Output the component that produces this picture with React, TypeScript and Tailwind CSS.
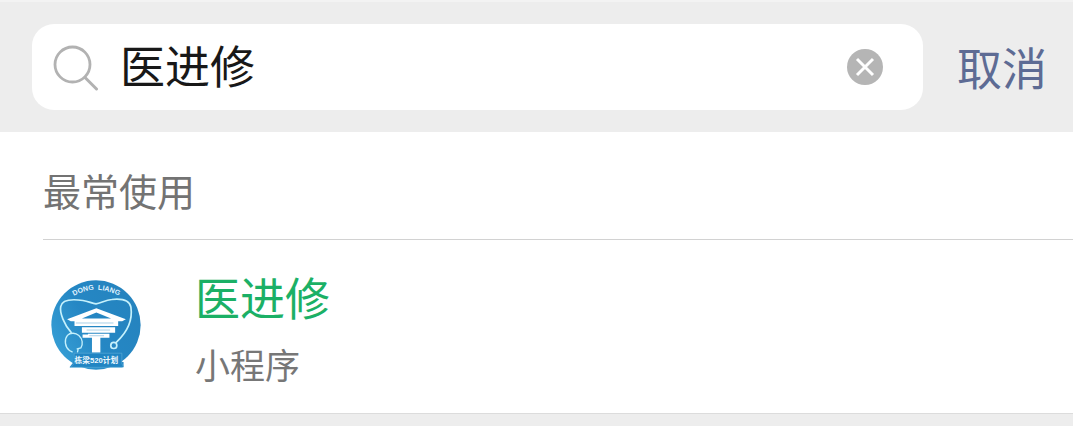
import { useState } from "react";

type MiniProgram = {
  name: string;
  kind: string;
};

const FREQUENT: MiniProgram[] = [{ name: "医进修", kind: "小程序" }];

function SearchIcon() {
  return (
    <svg viewBox="0 0 48 48" className="size-12 shrink-0" fill="none" stroke="#b2b2b2" aria-hidden="true">
      <circle cx="20.5" cy="21.5" r="17.5" strokeWidth="2.8" />
      <path d="M33 34.5 44.5 46" strokeWidth="3" strokeLinecap="round" />
    </svg>
  );
}

function ClearIcon() {
  return (
    <svg viewBox="0 0 36 36" className="size-9" aria-hidden="true">
      <circle cx="18" cy="18" r="18" fill="#b5b5b5" />
      <path d="M10 10 26 26M26 10 10 26" stroke="#fff" strokeWidth="3" />
    </svg>
  );
}

function ProgramLogo() {
  return (
    <svg viewBox="36 32 268 268" className="mt-[18px] size-[90px] shrink-0" role="img" aria-label="Dong Liang">
      <defs>
        <linearGradient id="disc" x1="0" y1="0.8" x2="1" y2="0.2">
          <stop offset="0" stopColor="#38a0d6" />
          <stop offset="0.45" stopColor="#2587c4" />
          <stop offset="1" stopColor="#2583be" />
        </linearGradient>
        <path id="arc" d="M92 86Q170 36 250 86" />
      </defs>
      <circle cx="170" cy="166" r="133" fill="url(#disc)" />
      <text fill="#e2f4ff" fontSize="21" fontWeight="700" fontFamily="Liberation Sans, sans-serif">
        <textPath href="#arc" startOffset="50%" textAnchor="middle">
          DONG&#160; LIANG
        </textPath>
      </text>

      {/* stethoscope */}
      <g fill="none" stroke="#c5f1fc" strokeWidth="5" strokeLinecap="round" strokeLinejoin="round">
        <path d="M96 188C76 166 61 130 65 111C69 88 103 89 131 93C149 96 158 102 170 103C184 101 199 91 217 90C245 87 270 92 274 113C280 155 258 192 231 217" />
        <path
          d="M91 242C77 231 75 209 85 197C94 187 110 190 119 197C130 207 132 223 125 234L114 237M91 242 99 246M117 237 115 246"
          strokeWidth="4"
        />
        <circle cx="223" cy="227" r="9" />
      </g>

      {/* pavilion */}
      <g fill="#fff">
        <path fillRule="evenodd" d="M84 149 171 116 259 149 248 155H95ZM128 147H215L171 129Z" />
        <path d="M106 152H236V169H106ZM128 173H227V189H128ZM146 192H210V204H130V194H146ZM158 204H183V248H158Z" />
      </g>
      <path d="M110 160H222M142 181H212M150 198H194" stroke="#80badd" strokeWidth="2" />

      {/* name plate */}
      <path d="M105 250H247V276H252V292H91L101 279Z" fill="#2185c3" />
      <path d="M105 250H247V281L252 291M105 250V281L93 292H249" fill="none" stroke="#5babd6" strokeWidth="2" />
      <text
        x="171"
        y="280"
        textAnchor="middle"
        fill="#eef9ff"
        fontSize="23"
        fontWeight="700"
        fontFamily="Liberation Sans, Noto Sans CJK SC, sans-serif"
      >
        栋梁520计划
      </text>
    </svg>
  );
}

export default function App() {
  const [query, setQuery] = useState("医进修");

  return (
    <div className="min-h-screen bg-[#ededed] font-['Noto_Sans_CJK_SC',sans-serif]">
      <header className="flex items-center gap-[34px] border-t-2 border-[#f3f3f3] pt-[22px] pr-[26px] pb-[22px] pl-8">
        <div className="flex h-[86px] min-w-0 flex-1 items-center rounded-[22px] bg-white pr-10 pl-5">
          <SearchIcon />
          <input
            type="text"
            aria-label="搜索"
            value={query}
            onChange={(e) => setQuery(e.target.value)}
            className="ml-5 h-16 min-w-0 flex-1 bg-transparent pb-1 text-[45px] text-[#181818] outline-none"
          />
          <button type="button" aria-label="清除" onClick={() => setQuery("")}>
            <ClearIcon />
          </button>
        </div>
        <button type="button" className="text-[45px] leading-16 text-[#5d6b94]">
          取消
        </button>
      </header>

      <main className="border-b border-[#dcdcdc] bg-white">
        <section className="pl-[43px]">
          <h2 className="border-b border-[#d2d2d2] pt-[30px] pb-[22px] text-[38px] leading-[55px] text-[#737373]">
            最常使用
          </h2>
          <ul>
            {FREQUENT.map((item) => (
              <li key={item.name}>
                <a href="#" className="flex items-start gap-[54px] pt-[22px] pr-8 pb-[21px] pl-2">
                  <ProgramLogo />
                  <div>
                    <p className="text-[45px] leading-[70px] text-[#1bb066]">{item.name}</p>
                    <p className="mt-1 text-[35px] leading-14 text-[#777777]">{item.kind}</p>
                  </div>
                </a>
              </li>
            ))}
          </ul>
        </section>
      </main>
    </div>
  );
}
